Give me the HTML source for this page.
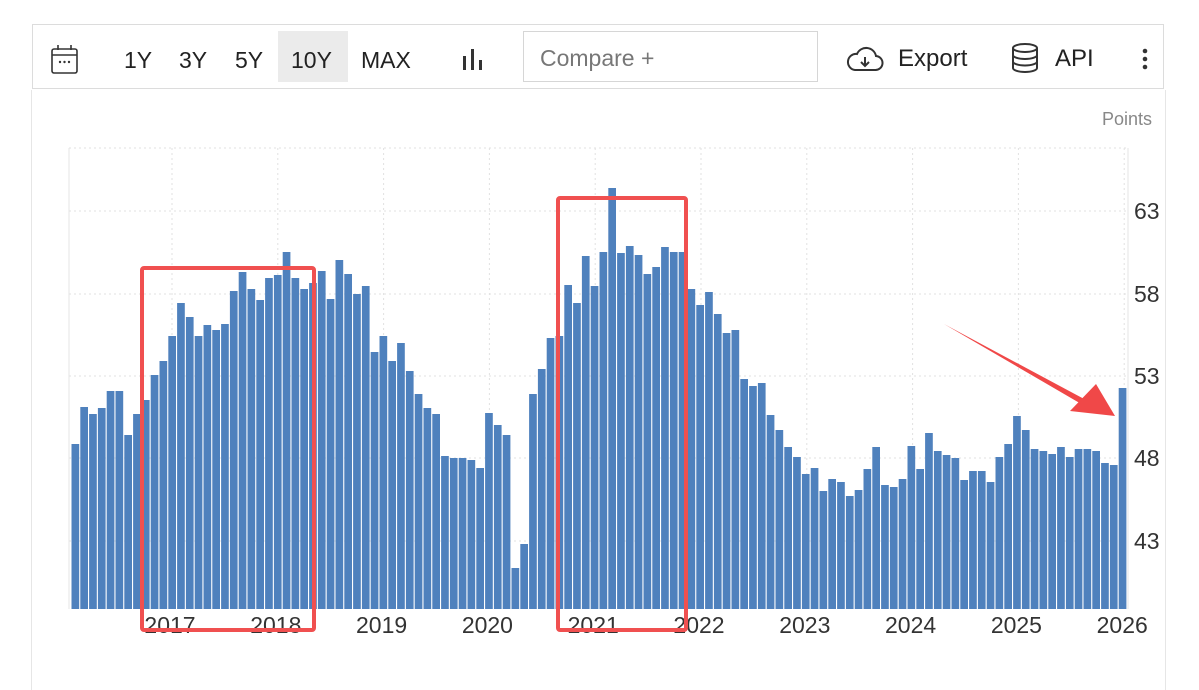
<!DOCTYPE html>
<html><head><meta charset="utf-8"><style>
body{margin:0;width:1199px;height:674px;background:#fff;font-family:"Liberation Sans",sans-serif;overflow:hidden;position:relative}
.t{position:absolute;color:#222;font-size:23px;line-height:26px}
</style></head><body>
<div style="position:absolute;left:31px;top:90px;width:1133px;height:600px;border-left:1px solid #e6e6e6;border-right:1px solid #e6e6e6"></div>
<div style="position:absolute;left:32px;top:24px;width:1130px;height:63px;border:1px solid #dcdcdc"></div>
<svg style="position:absolute;left:50px;top:44px" width="30" height="32" viewBox="0 0 30 32"><rect x="2" y="5" width="25" height="24" rx="2" fill="none" stroke="#333" stroke-width="1.6"/><line x1="2" y1="11" x2="27" y2="11" stroke="#333" stroke-width="1.6"/><line x1="8" y1="1" x2="8" y2="6" stroke="#333" stroke-width="1.6"/><line x1="21" y1="1" x2="21" y2="6" stroke="#333" stroke-width="1.6"/><circle cx="10" cy="18" r="1.2" fill="#333"/><circle cx="14.5" cy="18" r="1.2" fill="#333"/><circle cx="19" cy="18" r="1.2" fill="#333"/></svg>
<div style="position:absolute;left:278px;top:31px;width:70px;height:51px;background:#ebebeb"></div>
<div class="t" style="left:124px;top:47px">1Y</div>
<div class="t" style="left:179px;top:47px">3Y</div>
<div class="t" style="left:235px;top:47px">5Y</div>
<div class="t" style="left:291px;top:47px">10Y</div>
<div class="t" style="left:361px;top:47px">MAX</div>
<svg style="position:absolute;left:462px;top:48px" width="26" height="24"><rect x="1" y="8" width="3" height="14" fill="#333"/><rect x="9" y="1" width="3" height="21" fill="#333"/><rect x="17" y="12" width="3" height="10" fill="#333"/></svg>
<div style="position:absolute;left:523px;top:31px;width:293px;height:49px;border:1px solid #d6d6d6"></div>
<div class="t" style="left:540px;top:45px;color:#777;font-size:23px">Compare +</div>
<svg style="position:absolute;left:845px;top:46px" width="40" height="28" viewBox="0 0 40 28"><path d="M10 24 H30 A7 7 0 0 0 31 10 A10 10 0 0 0 12 8 A8 8 0 0 0 10 24 Z" fill="none" stroke="#333" stroke-width="2"/><path d="M20 11 V20 M16 16 L20 20 L24 16" fill="none" stroke="#333" stroke-width="2"/></svg>
<div class="t" style="left:898px;top:46px;font-size:24px">Export</div>
<svg style="position:absolute;left:1011px;top:42px" width="28" height="32" viewBox="0 0 28 32"><ellipse cx="14" cy="6" rx="12" ry="4" fill="none" stroke="#333" stroke-width="2"/><path d="M2 6 V26 A12 4 0 0 0 26 26 V6 M2 13 A12 4 0 0 0 26 13 M2 19.5 A12 4 0 0 0 26 19.5" fill="none" stroke="#333" stroke-width="2"/></svg>
<div class="t" style="left:1055px;top:46px;font-size:24px">API</div>
<svg style="position:absolute;left:1140px;top:47px" width="10" height="26"><circle cx="5" cy="4" r="2.3" fill="#333"/><circle cx="5" cy="12" r="2.3" fill="#333"/><circle cx="5" cy="20" r="2.3" fill="#333"/></svg>
<div class="t" style="left:1102px;top:106px;color:#888;font-size:18px">Points</div>
<svg id="c" style="position:absolute;left:0;top:0" width="1199" height="674"></svg>
<script>
var tops=[444,407,414,408,391,391,435,414,400,375,361,336,303,317,336,325,330,324,291,272,289,300,278,275,252,278,289,283,271,299,260,274,294,286,352,336,361,343,371,394,
408,414,456,458,458,460,468,413,425,435,568,544,394,369,338,336,285,303,256,286,252,188,253,246,255,274,267,247,252,252,289,305,292,314,333,330,379,386,383,
415,430,447,457,474,468,491,479,482,496,490,469,447,485,487,479,446,469,433,451,455,458,480,471,471,482,457,444,416,430,449,451,454,447,457,449,449,451,463,465,388];
var s='';
s+='<line x1="69" y1="148" x2="69" y2="609" stroke="#e6e6e6"/><line x1="1128" y1="148" x2="1128" y2="609" stroke="#e6e6e6"/>';
[148,211,294,376,458,541].forEach(function(y){s+='<line x1="69" y1="'+y+'" x2="1128" y2="'+y+'" stroke="#e2e2e2" stroke-dasharray="2,3"/>';});
var yrs=[2017,2018,2019,2020,2021,2022,2023,2024,2025,2026];
yrs.forEach(function(v,i){var x=172+i*105.8;s+='<line x1="'+x+'" y1="148" x2="'+x+'" y2="609" stroke="#e2e2e2" stroke-dasharray="2,3"/>';s+='<text x="'+(x-2)+'" y="633" font-size="23" fill="#333" text-anchor="middle" font-family="Liberation Sans">'+v+'</text>';});
for(var i=0;i<tops.length;i++){var x=71.5+i*8.8;s+='<rect x="'+x.toFixed(2)+'" y="'+tops[i]+'" width="7.7" height="'+(609-tops[i])+'" fill="#4f81bd"/>';}
[[63,211],[58,294],[53,376],[48,458],[43,541]].forEach(function(a){s+='<text x="1134" y="'+(a[1]+8)+'" font-size="23" fill="#333" font-family="Liberation Sans">'+a[0]+'</text>';});
s+='<rect x="142" y="268" width="172" height="362" fill="none" stroke="#f05050" stroke-width="4" rx="2"/>';
s+='<rect x="558" y="198" width="128" height="432" fill="none" stroke="#f05050" stroke-width="4" rx="2"/>';
s+='<path d="M944 324 L1086 400 L1083 405 Z" fill="#f04848"/><path d="M1115 416 L1070 411 L1096 384 Z" fill="#f04848"/>';
document.getElementById('c').innerHTML=s;
</script>
</body></html>
